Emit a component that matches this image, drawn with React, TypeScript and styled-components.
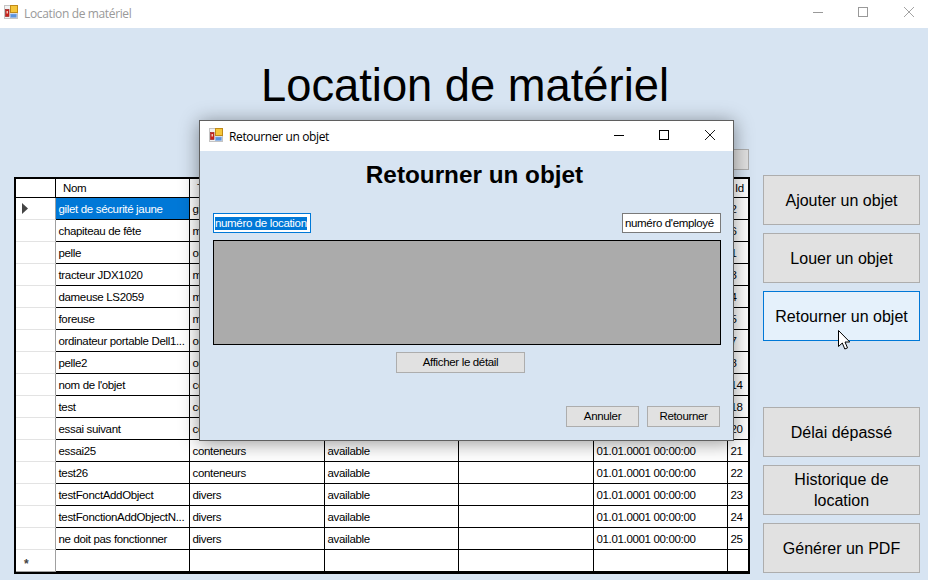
import styled, { createGlobalStyle } from 'styled-components';

const GlobalStyle = createGlobalStyle`
  html, body {
    margin: 0;
    padding: 0;
    background: #d7e4f2;
  }
  #root {
    width: 928px;
    height: 580px;
    overflow: hidden;
  }
`;

const Window = styled.div`
  position: relative;
  width: 928px;
  height: 580px;
  overflow: hidden;
  background: #d7e4f2;
  font-family: 'Liberation Sans', Arial, sans-serif;
  color: #000;
`;

const TitleBar = styled.div<{ $inactive?: boolean; $height: number }>`
  display: flex;
  align-items: center;
  box-sizing: border-box;
  height: ${(p) => p.$height}px;
  padding-bottom: ${(p) => (p.$inactive ? 4 : 2)}px;
  background: #fff;
  color: ${(p) => (p.$inactive ? '#999' : '#000')};
  font-family: 'Open Sans', 'Noto Sans', sans-serif;
  font-size: 12px;
  letter-spacing: -0.36px;
`;

const TitleIcon = styled.svg<{ $left: number }>`
  flex: none;
  margin: 0 6px 0 ${(p) => p.$left}px;
`;

const TitleText = styled.span`
  flex: 1;
  padding-top: 2px;
  white-space: nowrap;
`;

const Controls = styled.div<{ $shift: number }>`
  display: flex;
  margin-right: ${(p) => p.$shift}px;
`;

const Control = styled.div`
  display: flex;
  align-items: center;
  box-sizing: border-box;
  width: 45px;
  height: 20px;
  padding-left: 18px;

  &:last-child {
    margin-left: 1px;
  }
`;

const MainTitle = styled.h1`
  height: 121px;
  margin: 0;
  padding: 33px 0 0 2px;
  box-sizing: border-box;
  font-size: 45.3px;
  line-height: 50px;
  font-weight: 400;
  text-align: center;
`;

const Workspace = styled.div`
  display: flex;
  gap: 13px;
  padding-left: 14px;
`;

const LeftColumn = styled.div`
  display: flex;
  flex-direction: column;
  width: 736px;
`;

const TopActions = styled.div`
  display: flex;
  justify-content: flex-end;
  height: 21px;
  margin: 0 1px 7px 0;
`;

const HiddenButton = styled.div`
  width: 120px;
  background: #e1e1e1;
  border: 1px solid #adadad;
  box-sizing: border-box;
`;

const DataGrid = styled.div`
  border: 2px solid #000;
  background: #fff;
  font-size: 11.5px;
  letter-spacing: -0.34px;
`;

const Row = styled.div<{ $header?: boolean }>`
  display: grid;
  grid-template-columns: 40px 134px 135px 134px 135px 134px 20px;
  height: ${(p) => (p.$header ? 19 : 22)}px;
`;

const RowHead = styled.div<{ $corner?: boolean; $last?: boolean }>`
  display: flex;
  align-items: center;
  box-sizing: border-box;
  border-right: 1px solid ${(p) => (p.$corner ? '#000' : '#a0a0a0')};
  border-bottom: 1px solid ${(p) => (p.$corner ? '#000' : p.$last ? '#a0a0a0' : '#e3e3e3')};
  padding-left: 6px;
`;

const Cell = styled.div<{ $selected?: boolean; $last?: boolean }>`
  box-sizing: border-box;
  padding-left: 2.5px;
  line-height: 22px;
  white-space: nowrap;
  overflow: hidden;
  border-right: ${(p) => (p.$last ? 'none' : '1px solid #000')};
  border-bottom: 1px solid #000;
  background: ${(p) => (p.$selected ? '#0078d7' : '#fff')};
  color: ${(p) => (p.$selected ? '#fff' : '#000')};
`;

const HeadCell = styled(Cell)`
  padding-left: 7px;
  line-height: 19px;
`;

const NewRowMark = styled.span`
  margin-left: 2px;
  padding-top: 7px;
  font-size: 12px;
  font-weight: 700;
  line-height: 12px;
  color: #444;
`;

const SideColumn = styled.div`
  display: flex;
  flex-direction: column;
  gap: 66px;
  padding-top: 26px;
`;

const SideGroup = styled.div`
  display: flex;
  flex-direction: column;
  gap: 8px;
`;

const SideButton = styled.div<{ $hover?: boolean }>`
  display: flex;
  align-items: center;
  justify-content: center;
  box-sizing: border-box;
  width: 157px;
  height: 50px;
  padding: 0 10px;
  font-size: 16px;
  line-height: 21px;
  text-align: center;
  background: ${(p) => (p.$hover ? '#e5f1fb' : '#e1e1e1')};
  border: 1px solid ${(p) => (p.$hover ? '#0078d7' : '#adadad')};
`;

const Dialog = styled.div`
  position: absolute;
  left: 199px;
  top: 120px;
  display: flex;
  flex-direction: column;
  box-sizing: border-box;
  width: 535px;
  height: 321px;
  background: #d7e4f2;
  border: 1px solid #5f5f5f;
  box-shadow: 0 2px 18px rgba(0, 0, 0, 0.42);
`;

const DialogBody = styled.div`
  display: flex;
  flex-direction: column;
  flex: 1;
  padding: 0 12px 13px 13px;
`;

const DialogHeading = styled.h2`
  height: 62px;
  margin: 0;
  padding: 9px 0 0 15px;
  box-sizing: border-box;
  font-size: 24.3px;
  line-height: 30px;
  font-weight: 700;
  text-align: center;
`;

const Fields = styled.div`
  display: flex;
  justify-content: space-between;
  margin-bottom: 7px;
  font-size: 11.5px;
  letter-spacing: -0.34px;
`;

const Field = styled.div<{ $focused?: boolean }>`
  box-sizing: border-box;
  width: ${(p) => (p.$focused ? 98 : 99)}px;
  height: 20px;
  padding-left: ${(p) => (p.$focused ? 1 : 2)}px;
  line-height: 18px;
  white-space: nowrap;
  background: #fff;
  border: 1px solid ${(p) => (p.$focused ? '#0078d7' : '#7a7a7a')};
`;

const Selection = styled.span`
  display: inline-block;
  line-height: 13px;
  background: #0078d7;
  color: #fff;
`;

const DetailGrid = styled.div`
  box-sizing: border-box;
  height: 105px;
  background: #ababab;
  border: 1px solid #000;
`;

const DialogButton = styled.div<{ $width: number }>`
  box-sizing: border-box;
  width: ${(p) => p.$width}px;
  height: 21px;
  font-size: 11.5px;
  letter-spacing: -0.34px;
  line-height: 19px;
  text-align: center;
  background: #e1e1e1;
  border: 1px solid #adadad;
`;

const DetailAction = styled.div`
  display: flex;
  margin: 7px 0 0 183px;
`;

const DialogFooter = styled.div`
  display: flex;
  justify-content: flex-end;
  gap: 8px;
  margin: auto 1px 0 0;
`;

const Cursor = styled.svg`
  position: absolute;
  left: 838px;
  top: 330px;
`;

const AppIcon = ({ left }: { left: number }) => (
  <TitleIcon $left={left} width="14" height="14" viewBox="0 0 14 14">
    <rect x="0.5" y="0.5" width="13" height="13" fill="#f1f1f1" stroke="#c4c4c4" />
    <rect x="1.5" y="4.5" width="3.5" height="7" fill="#cc1f1a" stroke="#9a2a26" strokeWidth="0.7" />
    <rect x="2.5" y="6" width="1.5" height="2.5" fill="#f2c8b8" />
    <rect x="6.5" y="0.5" width="7" height="7" fill="#f5c63a" stroke="#c08a18" />
    <rect x="6.5" y="9" width="6" height="3.5" fill="#5b93de" stroke="#8fb2e4" strokeWidth="0.7" />
  </TitleIcon>
);

const WindowControls = ({ color, shift }: { color: string; shift: number }) => (
  <Controls $shift={shift}>
    <Control>
      <svg width="10" height="10" viewBox="0 0 10 10">
        <path d="M0 5.5h10" stroke={color} fill="none" />
      </svg>
    </Control>
    <Control>
      <svg width="10" height="10" viewBox="0 0 10 10">
        <rect x="0.5" y="0.5" width="9" height="9" stroke={color} fill="none" />
      </svg>
    </Control>
    <Control>
      <svg width="10" height="10" viewBox="0 0 10 10">
        <path d="M0 0l10 10M10 0L0 10" stroke={color} fill="none" strokeWidth="0.9" />
      </svg>
    </Control>
  </Controls>
);

type Item = [string, string, number];

const items: Item[] = [
  ['gilet de sécurité jaune', 'gilets', 2],
  ['chapiteau de fête', 'matériel', 6],
  ['pelle', 'outils', 1],
  ['tracteur JDX1020', 'machines', 3],
  ['dameuse LS2059', 'machines', 4],
  ['foreuse', 'machines', 5],
  ['ordinateur portable Dell1...', 'outils', 7],
  ['pelle2', 'outils', 8],
  ["nom de l'objet", 'conteneurs', 14],
  ['test', 'conteneurs', 18],
  ['essai suivant', 'conteneurs', 20],
  ['essai25', 'conteneurs', 21],
  ['test26', 'conteneurs', 22],
  ['testFonctAddObject', 'divers', 23],
  ['testFonctionAddObjectN...', 'divers', 24],
  ['ne doit pas fonctionner', 'divers', 25],
];

export default function App() {
  return (
    <Window>
      <GlobalStyle />
      <TitleBar $inactive $height={28}>
        <AppIcon left={4} />
        <TitleText>Location de matériel</TitleText>
        <WindowControls color="#999" shift={-3} />
      </TitleBar>
      <MainTitle>Location de matériel</MainTitle>
      <Workspace>
        <LeftColumn>
          <TopActions>
            <HiddenButton />
          </TopActions>
          <DataGrid>
            <Row $header>
              <RowHead $corner />
              <HeadCell>Nom</HeadCell>
              <HeadCell>Type</HeadCell>
              <HeadCell>Statut</HeadCell>
              <HeadCell>Employé</HeadCell>
              <HeadCell>Date</HeadCell>
              <HeadCell $last>Id</HeadCell>
            </Row>
            {items.map(([name, type, id], index) => (
              <Row key={id}>
                <RowHead>
                  {index === 0 && (
                    <svg width="6" height="11" viewBox="0 0 6 11">
                      <path d="M0 0l6 5.5L0 11z" fill="#444" />
                    </svg>
                  )}
                </RowHead>
                <Cell $selected={index === 0}>{name}</Cell>
                <Cell>{type}</Cell>
                <Cell>available</Cell>
                <Cell />
                <Cell>01.01.0001 00:00:00</Cell>
                <Cell $last>{id}</Cell>
              </Row>
            ))}
            <Row>
              <RowHead $last>
                <NewRowMark>*</NewRowMark>
              </RowHead>
              <Cell />
              <Cell />
              <Cell />
              <Cell />
              <Cell />
              <Cell $last />
            </Row>
          </DataGrid>
        </LeftColumn>
        <SideColumn>
          <SideGroup>
            <SideButton>Ajouter un objet</SideButton>
            <SideButton>Louer un objet</SideButton>
            <SideButton $hover>Retourner un objet</SideButton>
          </SideGroup>
          <SideGroup>
            <SideButton>Délai dépassé</SideButton>
            <SideButton>Historique de location</SideButton>
            <SideButton>Générer un PDF</SideButton>
          </SideGroup>
        </SideColumn>
      </Workspace>

      <Dialog>
        <TitleBar $height={30}>
          <AppIcon left={9} />
          <TitleText>Retourner un objet</TitleText>
          <WindowControls color="#000" shift={1} />
        </TitleBar>
        <DialogBody>
          <DialogHeading>Retourner un objet</DialogHeading>
          <Fields>
            <Field $focused>
              <Selection>numéro de location</Selection>
            </Field>
            <Field>numéro d'employé</Field>
          </Fields>
          <DetailGrid />
          <DetailAction>
            <DialogButton $width={129}>Afficher le détail</DialogButton>
          </DetailAction>
          <DialogFooter>
            <DialogButton $width={73}>Annuler</DialogButton>
            <DialogButton $width={73}>Retourner</DialogButton>
          </DialogFooter>
        </DialogBody>
      </Dialog>

      <Cursor width="13" height="20" viewBox="0 0 13 20">
        <path
          d="M0.5 0.5V16.5L4.3 13L6.8 19L9.5 17.9L7 12H11.8Z"
          fill="#fff"
          stroke="#000"
          strokeWidth="1"
        />
      </Cursor>
    </Window>
  );
}
